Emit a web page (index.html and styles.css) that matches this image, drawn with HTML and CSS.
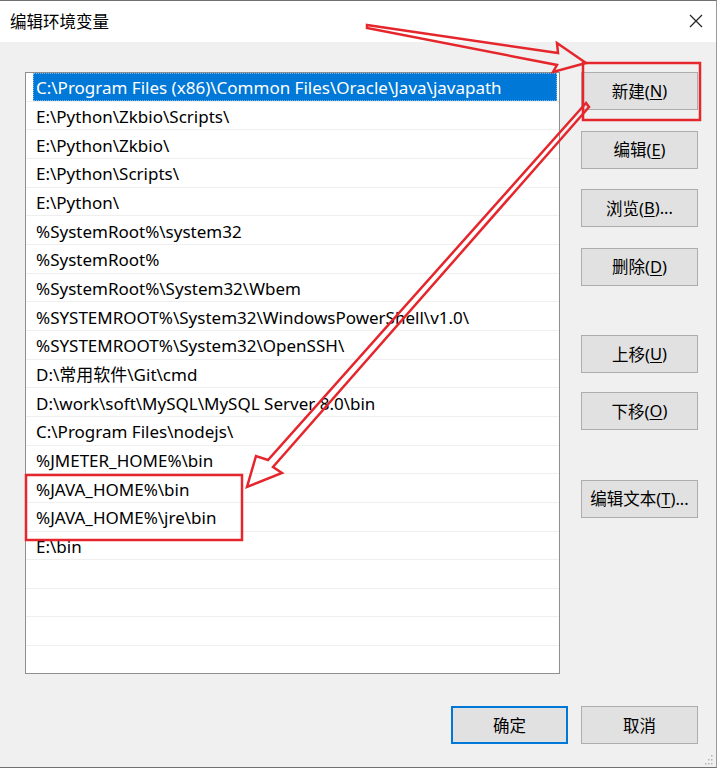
FILE: index.html
```html
<!DOCTYPE html>
<html lang="zh-CN">
<head>
<meta charset="utf-8">
<title>编辑环境变量</title>
<link rel="stylesheet" href="styles.css">
</head>
<body>
<div class="window">
  <div class="titlebar">
    <span class="title">编辑环境变量</span>
    <svg class="close" width="14" height="14" viewBox="0 0 14 14"><path d="M1 1 L13 13 M13 1 L1 13" stroke="#222" stroke-width="1.2" fill="none"/></svg>
  </div>
  <div class="content">
    <div class="main">
      <div class="list">
        <div class="row"><span class="cell sel">C:\Program Files (x86)\Common Files\Oracle\Java\javapath</span></div>
        <div class="row"><span class="cell">E:\Python\Zkbio\Scripts\</span></div>
        <div class="row"><span class="cell">E:\Python\Zkbio\</span></div>
        <div class="row"><span class="cell">E:\Python\Scripts\</span></div>
        <div class="row"><span class="cell">E:\Python\</span></div>
        <div class="row"><span class="cell">%SystemRoot%\system32</span></div>
        <div class="row"><span class="cell">%SystemRoot%</span></div>
        <div class="row"><span class="cell">%SystemRoot%\System32\Wbem</span></div>
        <div class="row"><span class="cell">%SYSTEMROOT%\System32\WindowsPowerShell\v1.0\</span></div>
        <div class="row"><span class="cell">%SYSTEMROOT%\System32\OpenSSH\</span></div>
        <div class="row"><span class="cell">D:\常用软件\Git\cmd</span></div>
        <div class="row"><span class="cell">D:\work\soft\MySQL\MySQL Server 8.0\bin</span></div>
        <div class="row"><span class="cell">C:\Program Files\nodejs\</span></div>
        <div class="row"><span class="cell">%JMETER_HOME%\bin</span></div>
        <div class="row"><span class="cell">%JAVA_HOME%\bin</span></div>
        <div class="row"><span class="cell">%JAVA_HOME%\jre\bin</span></div>
        <div class="row"><span class="cell">E:\bin</span></div>
        <div class="row"><span class="cell"></span></div>
        <div class="row"><span class="cell"></span></div>
        <div class="row"><span class="cell"></span></div>
        <div class="row"><span class="cell"></span></div>
      </div>
      <div class="side">
        <div class="btn">新建(<u>N</u>)</div>
        <div class="btn">编辑(<u>E</u>)</div>
        <div class="btn">浏览(<u>B</u>)...</div>
        <div class="btn">删除(<u>D</u>)</div>
        <div class="btn gap-top">上移(<u>U</u>)</div>
        <div class="btn">下移(<u>O</u>)</div>
        <div class="btn gap-top">编辑文本(<u>T</u>)...</div>
      </div>
    </div>
    <div class="footer">
      <div class="btn default">确定</div>
      <div class="btn">取消</div>
    </div>
  </div>
  <svg class="grip" width="10" height="10" viewBox="0 0 10 10"><g fill="#b5b5b5"><rect x="8" y="0" width="1.5" height="1.5"/><rect x="5" y="4" width="1.5" height="1.5"/><rect x="8" y="4" width="1.5" height="1.5"/><rect x="2" y="8" width="1.5" height="1.5"/><rect x="5" y="8" width="1.5" height="1.5"/><rect x="8" y="8" width="1.5" height="1.5"/></g></svg>
</div>
<svg class="annot" width="720" height="769" viewBox="0 0 720 769">
  <g fill="none" stroke="#e5262c" stroke-width="2.5" stroke-linejoin="miter">
    <rect x="583" y="63" width="117" height="57"/>
    <rect x="26" y="475" width="216" height="65"/>
    <polygon points="367,25 558,53 557,43 586,63 553,72 557,65 367,28"/>
    <polygon points="586,103 268,460 256,456 247,487 282,473 273,467 589,107"/>
  </g>
</svg>
</body>
</html>
```

FILE: styles.css
```css
html, body {
  margin: 0;
  padding: 0;
  background: #ffffff;
}
body {
  font-family: "Noto Sans", "Noto Sans CJK SC", sans-serif;
  font-size: 15px;
  color: #000;
  position: relative;
  width: 720px;
  height: 769px;
  overflow: hidden;
}
.window {
  width: 716px;
  height: 766px;
  border-top: 1px solid #707070;
  border-right: 1px solid #9a9a9a;
  border-bottom: 1px solid #707070;
  background: #f0f0f0;
  position: relative;
}
.titlebar {
  height: 41px;
  background: #ffffff;
  display: flex;
  align-items: center;
  justify-content: space-between;
  padding: 0 13px 0 10px;
}
.title {
  font-family: "Noto Sans CJK SC", sans-serif;
  font-size: 16.5px;
  color: #000;
  margin-top: -2px;
}
.close {
  margin-top: -1px;
}
.content {
  padding: 30px 18px 0 25px;
}
.main {
  display: flex;
  align-items: flex-start;
}
.list {
  width: 533px;
  height: 600px;
  border: 1px solid #8f8f8f;
  background: #ffffff;
  overflow: hidden;
}
.row {
  height: 28.67px;
  box-sizing: border-box;
  border-bottom: 1px solid #efefef;
  padding: 0 2px 0 7px;
  display: flex;
}
.cell {
  flex: 1;
  display: flex;
  align-items: center;
  padding-left: 3px;
  white-space: nowrap;
  line-height: 1;
  padding-top: 2px;
  font-size: 17px;
}
.cell.sel {
  background: #0078d7;
  color: #ffffff;
  outline: 1px dotted #7fb6e6;
  outline-offset: -1px;
}
.side {
  margin-left: 21px;
  display: flex;
  flex-direction: column;
  gap: 20.5px;
}
.btn {
  width: 117px;
  height: 38px;
  box-sizing: border-box;
  background: #e1e1e1;
  border: 1px solid #adadad;
  display: flex;
  align-items: center;
  justify-content: center;
  font-size: 16.5px;
  padding-bottom: 1px;
}
.btn u {
  text-decoration-thickness: 1px;
  text-underline-offset: 2px;
}
.side .gap-top {
  margin-top: 29px;
}
.side .btn:nth-child(6) {
  margin-top: -1.5px;
}
.footer {
  display: flex;
  justify-content: flex-end;
  gap: 13px;
  margin-top: 32px;
}
.btn.default {
  border: 2px solid #0078d7;
}
.grip {
  position: absolute;
  right: 3px;
  bottom: 2px;
}
.annot {
  position: absolute;
  left: 0;
  top: 0;
  pointer-events: none;
}
```
